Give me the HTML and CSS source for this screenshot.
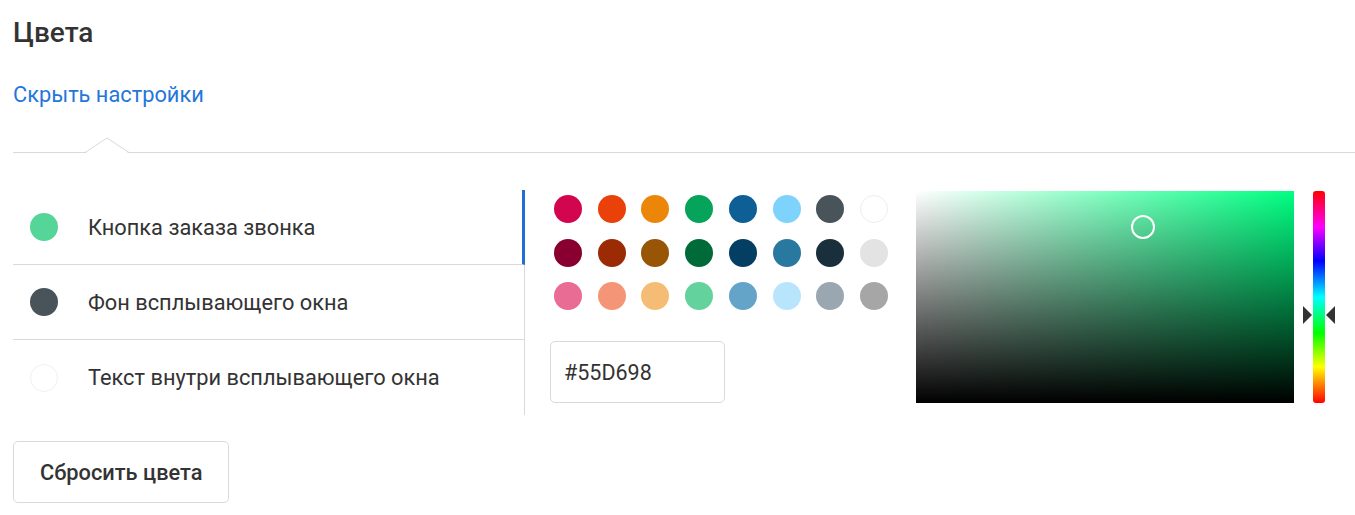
FILE: index.html
```html
<!DOCTYPE html>
<html lang="ru">
<head>
<meta charset="utf-8">
<link rel="stylesheet" href="styles.css">
</head>
<body>
<div class="page">
  <h1 class="title">Цвета</h1>
  <a class="toggle" href="#">Скрыть настройки</a>
  <div class="divider">
    <svg class="notch" width="46" height="17" viewBox="0 0 46 17"><polygon points="0,15.5 22,1 44,15.5" fill="#fff" stroke="#d9d9d9" stroke-width="1"/><rect x="1.5" y="15" width="41" height="2" fill="#fff"/></svg>
  </div>
  <div class="main">
    <div class="list">
      <div class="item active"><span class="dot" style="background:#55d698"></span><span class="label">Кнопка заказа звонка</span></div>
      <div class="item"><span class="dot" style="background:#48545a"></span><span class="label">Фон всплывающего окна</span></div>
      <div class="item last"><span class="dot dot-white"></span><span class="label">Текст внутри всплывающего окна</span></div>
    </div>
    <div class="palette">
      <div class="swatches">
        <span class="sw" style="background:#d1064f"></span>
        <span class="sw" style="background:#ea4009"></span>
        <span class="sw" style="background:#ec8609"></span>
        <span class="sw" style="background:#06a45b"></span>
        <span class="sw" style="background:#0e5f96"></span>
        <span class="sw" style="background:#7ed3fd"></span>
        <span class="sw" style="background:#48545a"></span>
        <span class="sw sw-white"></span>
        <span class="sw" style="background:#890030"></span>
        <span class="sw" style="background:#9a2b05"></span>
        <span class="sw" style="background:#985506"></span>
        <span class="sw" style="background:#006b38"></span>
        <span class="sw" style="background:#053e63"></span>
        <span class="sw" style="background:#2878a0"></span>
        <span class="sw" style="background:#1a2f3c"></span>
        <span class="sw" style="background:#e3e3e3"></span>
        <span class="sw" style="background:#e86c94"></span>
        <span class="sw" style="background:#f59577"></span>
        <span class="sw" style="background:#f5bc75"></span>
        <span class="sw" style="background:#64d29c"></span>
        <span class="sw" style="background:#65a4c9"></span>
        <span class="sw" style="background:#b9e5fc"></span>
        <span class="sw" style="background:#9aa7b0"></span>
        <span class="sw" style="background:#a6a6a6"></span>
      </div>
      <div class="hex">#55D698</div>
    </div>
    <div class="picker">
      <div class="sv">
        <div class="sv-white"></div>
        <div class="sv-black"></div>
        <span class="handle" style="left:227px;top:36px"></span>
      </div>
      <div class="hue">
        <span class="arrow arrow-l" style="top:124px"></span>
        <span class="arrow arrow-r" style="top:124px"></span>
      </div>
    </div>
  </div>
  <button class="reset" type="button">Сбросить цвета</button>
</div>
</body>
</html>
```
FILE: styles.css
```css
html, body {
  margin: 0;
  padding: 0;
  background: #fff;
}
body {
  font-family: Roboto, "Noto Sans", sans-serif;
  color: #333;
}
.page {
  padding: 0 0 0 13px;
}
.title {
  margin: 0;
  padding-top: 17px;
  font-size: 28px;
  line-height: 32px;
  font-weight: 500;
  color: #333;
}
.toggle {
  display: block;
  width: max-content;
  margin-top: 34px;
  font-size: 21.8px;
  line-height: 24px;
  color: #2576d9;
  text-decoration: none;
}
.divider {
  position: relative;
  margin-top: 30px;
  height: 15px;
  border-bottom: 1px solid #d9d9d9;
}
.notch {
  position: absolute;
  left: 72px;
  top: 0;
  display: block;
}
.main {
  display: flex;
  margin-top: 37px;
}
.list {
  width: 512px;
  flex: none;
}
.item {
  box-sizing: border-box;
  height: 75px;
  display: flex;
  align-items: center;
  padding-left: 17px;
  border-right: 1px solid #dadada;
  border-bottom: 1px solid #dadada;
}
.item.last {
  border-bottom: none;
}
.item.active {
  border-right: 3px solid #1f6fd6;
}
.dot {
  width: 28px;
  height: 28px;
  border-radius: 50%;
  flex: none;
}
.dot-white {
  box-sizing: border-box;
  border: 1px solid #f0f0f0;
  background: #fff;
}
.label {
  margin-left: 30px;
  font-size: 21.8px;
  color: #333;
}
.palette {
  width: 391px;
  flex: none;
  box-sizing: border-box;
  padding-left: 25px;
}
.swatches {
  margin: 5px 0 0 4px;
  display: grid;
  grid-template-columns: repeat(8, 28px);
  grid-auto-rows: 28px;
  column-gap: 15.71px;
  row-gap: 15.5px;
}
.sw {
  width: 28px;
  height: 28px;
  border-radius: 50%;
}
.sw-white {
  box-sizing: border-box;
  border: 1px solid #eee;
  background: #fff;
}
.hex {
  box-sizing: border-box;
  margin-top: 31px;
  width: 175px;
  height: 62px;
  border: 1px solid #d9d9d9;
  border-radius: 5px;
  display: flex;
  align-items: center;
  padding-left: 13px;
  font-size: 21.5px;
  color: #333;
}
.picker {
  display: flex;
  margin-top: 1px;
}
.sv {
  position: relative;
  width: 378px;
  height: 212px;
  background: #00ff82;
}
.sv-white,
.sv-black {
  position: absolute;
  inset: 0;
}
.sv-white {
  background: linear-gradient(to right, #fff, rgba(255,255,255,0));
}
.sv-black {
  background: linear-gradient(to bottom, rgba(0,0,0,0), #000);
}
.handle {
  position: absolute;
  width: 24px;
  height: 24px;
  margin: -12px 0 0 -12px;
  box-sizing: border-box;
  border: 2px solid #fff;
  border-radius: 50%;
}
.hue {
  position: relative;
  margin-left: 19px;
  width: 12px;
  height: 212px;
  border-radius: 3px;
  background: linear-gradient(to bottom, #ff0000 0%, #ff00ff 17%, #0000ff 33%, #00ffff 50%, #00ff00 67%, #ffff00 83%, #ff0000 100%);
}
.arrow {
  position: absolute;
  width: 0;
  height: 0;
  margin-top: -9px;
  border-top: 9px solid transparent;
  border-bottom: 9px solid transparent;
}
.arrow-l {
  left: -10px;
  border-left: 9px solid #333;
}
.arrow-r {
  right: -10px;
  border-right: 9px solid #333;
}
.reset {
  display: block;
  margin-top: 26px;
  box-sizing: border-box;
  height: 62px;
  padding: 0 26px;
  background: #fff;
  border: 1px solid #d9d9d9;
  border-radius: 5px;
  font-family: Roboto, "Noto Sans", sans-serif;
  font-size: 21.8px;
  font-weight: 500;
  color: #333;
}
```
